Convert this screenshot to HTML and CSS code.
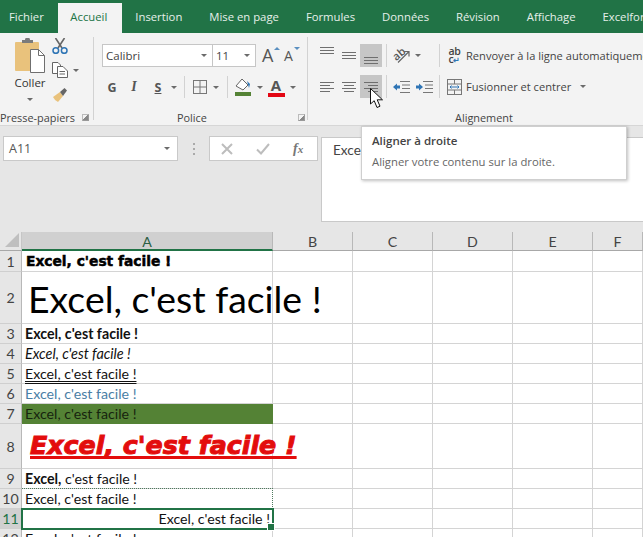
FILE: index.html
```html
<!DOCTYPE html>
<html lang="fr">
<head>
<meta charset="utf-8">
<title>Excel</title>
<link rel="stylesheet" href="styles.css">
</head>
<body>
<div class="app">
  <nav class="tabs">
    <span class="tab first">Fichier</span>
    <span class="tab active">Accueil</span>
    <span class="tab">Insertion</span>
    <span class="tab">Mise en page</span>
    <span class="tab">Formules</span>
    <span class="tab">Données</span>
    <span class="tab">Révision</span>
    <span class="tab">Affichage</span>
    <span class="tab">Excelformation</span>
  </nav>

  <section class="ribbon">
    <div class="group g-clip">
      <div class="clip-body">
        <div class="paste">
          <svg width="30" height="36" viewBox="0 0 30 36">
            <rect x="0" y="4" width="24" height="29" rx="1" fill="#e9c27c"/>
            <path d="M7 5 V2 H10 A2.500 2.500 0 0 1 15 2 H18 V5 Z" fill="#7b7b7b"/>
            <path d="M15.500 11.500 H23.500 L29.500 17.500 V34.500 H15.500 Z" fill="#fff" stroke="#6f6f6f"/>
            <path d="M23.500 11.500 V17.500 H29.500" fill="none" stroke="#6f6f6f"/>
          </svg>
          <span class="coller">Coller</span>
          <span class="arrow"></span>
        </div>
        <div class="clip-tools">
          <svg width="16" height="16" viewBox="0 0 16 16">
            <path d="M3.500 0 L10 10 M12.500 0 L6 10" stroke="#666" stroke-width="1.600" fill="none"/>
            <circle cx="3.800" cy="12.500" r="2.800" fill="none" stroke="#2f75b5" stroke-width="1.500"/>
            <circle cx="12.200" cy="12.500" r="2.800" fill="none" stroke="#2f75b5" stroke-width="1.500"/>
          </svg>
          <div class="copy-row">
            <svg width="16" height="16" viewBox="0 0 16 16" fill="#fff" stroke="#666">
              <path d="M.5 .5 H6 L8.500 3 V11.500 H.5 Z"/>
              <path d="M5.500 4.500 H11 L15.500 9 V15.500 H5.500 Z"/>
              <path d="M7.500 9.500 H13 M7.500 12 H13" fill="none"/>
            </svg>
            <span class="arrow"></span>
          </div>
          <svg width="17" height="17" viewBox="0 0 17 17">
            <path d="M1 11 L8 6 L11 10 L6 16 Q3 15 1 11 Z" fill="#e9c27c"/>
            <path d="M8 6 L12.500 2 L15 4.500 L11 10 Z" fill="#666"/>
          </svg>
        </div>
      </div>
      <div class="group-label l-clip"><span>Presse-papiers</span><i class="launcher"></i></div>
    </div>
    <div class="vsep"></div>

    <div class="group g-font">
      <div class="font-top">
        <div class="select s-font"><span>Calibri</span><span class="arrow"></span></div>
        <div class="select s-size"><span>11</span><span class="arrow"></span></div>
        <span class="grow big">A<i class="tri up"></i></span>
        <span class="grow small">A<i class="tri down"></i></span>
      </div>
      <div class="font-tools">
        <b class="fmt">G</b>
        <i class="fmt it">I</i>
        <u class="fmt st">S</u>
        <span class="arrow"></span>
        <span class="isep"></span>
        <svg width="14" height="14" viewBox="0 0 14 14" fill="none" stroke="#777"><rect x=".5" y=".5" width="13" height="13"/><path d="M7 0 V14 M0 7 H14"/></svg>
        <span class="arrow"></span>
        <span class="isep"></span>
        <svg width="17" height="20" viewBox="0 0 17 20">
          <path d="M1 9 L7 2 L13 8 L8 13 Z" fill="#fff" stroke="#666"/>
          <path d="M12 4 L15 7 L14 11 Z" fill="#2f75b5"/>
          <rect x="0" y="15" width="16" height="4" fill="#548235"/>
        </svg>
        <span class="arrow"></span>
        <span class="color-a">A</span>
        <span class="arrow"></span>
      </div>
      <div class="group-label l-font"><span>Police</span><i class="launcher"></i></div>
    </div>
    <div class="vsep"></div>

    <div class="group g-align">
      <div class="align-grid">
        <span class="lines top"><i></i><i></i><i></i></span>
        <span class="lines mid"><i></i><i></i><i></i></span>
        <span class="abtn"><span class="lines bot"><i></i><i></i><i></i></span></span>
        <span class="isep tall"></span>
        <div class="orient">
          <svg width="18" height="17" viewBox="0 0 18 17">
            <text x="0" y="11" class="orient-text" transform="rotate(-40 6 8)">ab</text>
            <path d="M5 15.500 L15.500 5 M11 4.500 H16 V9.500" stroke="#666" fill="none" stroke-width="1.200"/>
          </svg>
          <span class="arrow"></span>
        </div>
        <span class="isep tall"></span>
        <span class="wrap-ic">ab<br>c<em>↵</em></span>
        <span class="alabel">Renvoyer à la ligne automatiquement</span>

        <span class="lines l"><i></i><i class="s"></i><i></i><i class="s"></i></span>
        <span class="lines c"><i></i><i class="s"></i><i></i><i class="s"></i></span>
        <span class="abtn"><span class="lines r"><i></i><i class="s"></i><i></i><i class="s"></i></span></span>
        <span class="isep tall"></span>
        <svg width="17" height="14" viewBox="0 0 17 14">
          <path d="M7 1.500 H17 M9 5 H17 M9 8.500 H17 M7 12.500 H17" stroke="#777"/>
          <path d="M0 7 L4 3.500 V5.500 H7 V8.500 H4 V10.500 Z" fill="#2f75b5"/>
        </svg>
        <svg width="17" height="14" viewBox="0 0 17 14">
          <path d="M7 1.500 H17 M9 5 H17 M9 8.500 H17 M7 12.500 H17" stroke="#777"/>
          <path d="M7 7 L3 3.500 V5.500 H0 V8.500 H3 V10.500 Z" fill="#2f75b5"/>
        </svg>
        <span class="isep tall"></span>
        <svg width="15" height="16" viewBox="0 0 15 16" fill="none" stroke="#777">
          <rect x=".5" y=".5" width="14" height="15"/>
          <path d="M0 5 H15 M0 11 H15 M7.500 0 V5 M7.500 11 V16"/>
          <path d="M3 8 H12 M4.500 6.500 L3 8 L4.500 9.500 M10.500 6.500 L12 8 L10.500 9.500" stroke="#2f75b5"/>
        </svg>
        <span class="alabel">Fusionner et centrer<span class="arrow merge-arrow"></span></span>
      </div>
      <div class="group-label l-align"><span>Alignement</span></div>
    </div>
  </section>

  <section class="formula">
    <div class="namebox"><span>A11</span><span class="arrow"></span></div>
    <div class="grip"><i></i><i></i><i></i></div>
    <div class="fxbox">
      <svg width="12" height="12" viewBox="0 0 12 12"><path d="M1 1 L11 11 M11 1 L1 11" stroke="#bdbdbd" stroke-width="2"/></svg>
      <svg width="14" height="12" viewBox="0 0 14 12"><path d="M1 6.500 L5 10.500 L13 1" stroke="#bdbdbd" stroke-width="2" fill="none"/></svg>
      <span class="fx">f<small>x</small></span>
    </div>
    <div class="input">Excel, c'est facile !</div>
  </section>

  <section class="sheet">
    <div class="corner"><svg width="14" height="14" viewBox="0 0 14 14"><path d="M14 0 V14 H0 Z" fill="#bfbfbf"/></svg></div>
    <div class="ch on">A</div><div class="ch">B</div><div class="ch">C</div><div class="ch">D</div><div class="ch">E</div><div class="ch">F</div>

    <div class="rh">1</div><div class="cell black">Excel, c'est facile !</div><div class="cell"></div><div class="cell"></div><div class="cell"></div><div class="cell"></div><div class="cell"></div>
    <div class="rh">2</div><div class="cell huge">Excel, c'est facile !</div><div class="cell"></div><div class="cell"></div><div class="cell"></div><div class="cell"></div><div class="cell"></div>
    <div class="rh">3</div><div class="cell bold">Excel, c'est facile !</div><div class="cell"></div><div class="cell"></div><div class="cell"></div><div class="cell"></div><div class="cell"></div>
    <div class="rh">4</div><div class="cell ital">Excel, c'est facile !</div><div class="cell"></div><div class="cell"></div><div class="cell"></div><div class="cell"></div><div class="cell"></div>
    <div class="rh">5</div><div class="cell"><span class="dbl">Excel, c'est facile !</span></div><div class="cell"></div><div class="cell"></div><div class="cell"></div><div class="cell"></div><div class="cell"></div>
    <div class="rh">6</div><div class="cell blue">Excel, c'est facile !</div><div class="cell"></div><div class="cell"></div><div class="cell"></div><div class="cell"></div><div class="cell"></div>
    <div class="rh">7</div><div class="cell fill">Excel, c'est facile !</div><div class="cell"></div><div class="cell"></div><div class="cell"></div><div class="cell"></div><div class="cell"></div>
    <div class="rh">8</div><div class="cell fancy"><span>Excel, c'est facile !</span></div><div class="cell"></div><div class="cell"></div><div class="cell"></div><div class="cell"></div><div class="cell"></div>
    <div class="rh">9</div><div class="cell"><span><b>Excel,</b> c'est facile !</span></div><div class="cell"></div><div class="cell"></div><div class="cell"></div><div class="cell"></div><div class="cell"></div>
    <div class="rh">10</div><div class="cell ants">Excel, c'est facile !</div><div class="cell"></div><div class="cell"></div><div class="cell"></div><div class="cell"></div><div class="cell"></div>
    <div class="rh sel">11</div><div class="cell current">Excel, c'est facile !<i class="handle"></i></div><div class="cell"></div><div class="cell"></div><div class="cell"></div><div class="cell"></div><div class="cell"></div>
    <div class="rh">12</div><div class="cell">Excel, c'est facile !</div><div class="cell"></div><div class="cell"></div><div class="cell"></div><div class="cell"></div><div class="cell"></div>
  </section>

  <div class="tooltip">
    <strong>Aligner à droite</strong>
    <span>Aligner votre contenu sur la droite.</span>
  </div>
  <svg class="pointer" width="15" height="21" viewBox="0 0 15 21">
    <path d="M.5 .5 V16 L4.200 12.700 L7 19.500 L10 18.200 L7.200 11.800 H12.500 Z" fill="#fff" stroke="#111"/>
  </svg>
</div>
</body>
</html>
```
FILE: styles.css
```css
* { box-sizing: border-box; }
html, body { margin: 0; padding: 0; background: #e6e6e6; }
.app {
  position: relative;
  width: 643px;
  height: 537px;
  overflow: hidden;
  display: flex;
  flex-direction: column;
  font-family: "Open Sans", "Noto Sans", sans-serif;
  color: #444;
}

/* tabs */
.tabs {
  flex: none;
  height: 33px;
  padding-top: 3px;
  display: flex;
  background: #217346;
  color: #e6f0ea;
  font-size: 11.300px;
  white-space: nowrap;
  overflow: hidden;
}
.tab {
  padding: 0 13.500px;
  height: 30px;
  line-height: 28px;
  flex: none;
}
.tab.first { padding: 0 14px 0 9px; }
.tab.active {
  background: #f3f3f3;
  color: #217346;
  padding: 0 14.500px 0 12.500px;
}

/* ribbon */
.ribbon {
  flex: none;
  height: 93px;
  display: flex;
  background: #f3f3f3;
  border-bottom: 1px solid #d6d6d6;
  font-size: 11.100px;
  color: #444;
}
.group {
  position: relative;
  display: flex;
  flex-direction: column;
  flex: none;
}
.vsep {
  flex: none;
  width: 1px;
  margin: 4px 0 5px;
  background: #d2d2d2;
}
.g-clip { width: 93px; }
.g-font { width: 213px; padding-left: 8px; }
.g-align { flex: 1; min-width: 0; overflow: hidden; }
.group-label {
  margin-top: auto;
  height: 16px;
  line-height: 15px;
  display: flex;
  align-items: center;
  white-space: nowrap;
  font-size: 10.900px;
}
.l-clip { padding-right: 4px; }
.l-clip .launcher { margin-left: auto; }
.l-font { padding-left: 75px; padding-right: 2px; }
.l-font .launcher { margin-left: auto; }
.l-align { padding-left: 147px; }
.launcher {
  width: 7px;
  height: 7px;
  border: 1px solid #999;
  border-top-color: #bbb;
  border-left-color: #bbb;
  background: linear-gradient(135deg, transparent 50%, #888 50%);
}
.arrow {
  flex: none;
  display: inline-block;
  width: 0;
  height: 0;
  border-left: 3px solid transparent;
  border-right: 3px solid transparent;
  border-top: 3px solid #6b6b6b;
}

/* clipboard */
.clip-body {
  display: flex;
  padding: 5px 0 0 15px;
  gap: 7px;
}
.paste {
  width: 30px;
  display: flex;
  flex-direction: column;
  align-items: center;
}
.coller {
  margin-top: -1px;
  font-size: 11.500px;
  line-height: 20px;
  color: #333;
}
.paste .arrow { margin-top: 5px; }
.clip-tools {
  display: flex;
  flex-direction: column;
  gap: 8px;
}
.copy-row {
  display: flex;
  align-items: center;
  gap: 5px;
}

/* font */
.font-top {
  display: flex;
  align-items: flex-start;
  padding-top: 11px;
  height: 34px;
}
.select {
  height: 23px;
  background: #fff;
  border: 1px solid #c6c6c6;
  display: flex;
  align-items: center;
  justify-content: space-between;
  padding: 0 5px 0 3px;
  font-size: 11.500px;
}
.s-font { width: 110px; border-right-width: 0; }
.s-size { width: 44px; }
.grow { position: relative; color: #555; line-height: 23px; }
.big { margin-left: 6px; font-size: 18px; width: 22px; }
.small { font-size: 14px; width: 16px; }
.tri {
  position: absolute;
  top: 3px;
  right: 4px;
  width: 0;
  height: 0;
  border-left: 3px solid transparent;
  border-right: 3px solid transparent;
}
.tri.up { border-bottom: 3px solid #5a8fc0; }
.tri.down { border-top: 3px solid #5a8fc0; right: 0; }
.font-tools {
  margin-top: 9px;
  height: 22px;
  display: grid;
  grid-template-columns: 20px 24px 24px 7px 14px 17px 16px 6px 26px 7px 26px 8px;
  align-items: center;
  justify-items: center;
}
.fmt { font-size: 12.500px; color: #555; text-decoration: none; font-weight: 700; }
.it { font-family: "Liberation Serif", serif; font-size: 14px; font-style: italic; }
.st { text-decoration: underline; }
.isep {
  width: 1px;
  height: 22px;
  background: #d2d2d2;
}
.color-a {
  width: 17px;
  text-align: center;
  font-size: 15px;
  font-weight: 700;
  line-height: 15px;
  color: #555;
  border-bottom: 4px solid #e30613;
}

/* alignment */
.align-grid {
  margin-top: 11px;
  margin-left: 8px;
  display: grid;
  grid-template-columns: 22px 22px 22px 8px 23px 22px 8px 23px auto;
  grid-template-rows: 23px 23px;
  row-gap: 8px;
  align-items: center;
  justify-items: center;
  width: 360px;
}
.lines {
  display: flex;
  flex-direction: column;
  width: 14px;
  gap: 2px;
}
.lines i { display: block; height: 1px; background: #6f6f6f; }
.lines.top { align-self: start; padding-top: 3px; }
.lines.l i.s { width: 10px; }
.lines.c i.s { width: 10px; align-self: center; }
.lines.r i.s { width: 10px; align-self: flex-end; }
.abtn {
  width: 22px;
  height: 23px;
  background: #c6c6c6;
  display: flex;
  align-items: center;
  justify-content: center;
}
.abtn .bot { align-self: flex-end; padding-bottom: 3px; }
.isep.tall { height: 23px; }
.orient {
  grid-column: span 2;
  justify-self: start;
  display: flex;
  align-items: center;
  gap: 4px;
  padding-left: 3px;
}
.orient-text { font-size: 11px; font-weight: 600; fill: #555; }
.wrap-ic {
  font-size: 10.500px;
  line-height: 8px;
  color: #444;
  letter-spacing: -.2px;
  font-weight: 600;
}
.wrap-ic em { color: #2f75b5; font-style: normal; font-size: 8px; }
.alabel {
  justify-self: start;
  white-space: nowrap;
  display: flex;
  align-items: center;
}
.merge-arrow { margin-left: 9px; }

/* formula bar */
.formula {
  flex: none;
  height: 106px;
  padding: 10px 0 0 3px;
  display: flex;
  align-items: flex-start;
  background: #e6e6e6;
}
.namebox {
  width: 175px;
  height: 25px;
  flex: none;
  background: #fff;
  border: 1px solid #c9c9c9;
  display: flex;
  align-items: center;
  justify-content: space-between;
  padding: 0 7px 0 5px;
  font-size: 12.500px;
  color: #555;
}
.grip {
  flex: none;
  width: 31px;
  height: 25px;
  display: flex;
  flex-direction: column;
  align-items: center;
  justify-content: center;
  gap: 3px;
}
.grip i { width: 2px; height: 2px; background: #aaa; }
.fxbox {
  flex: none;
  width: 109px;
  height: 25px;
  background: #fff;
  border: 1px solid #c9c9c9;
  display: flex;
  align-items: center;
  padding-left: 11px;
  gap: 23px;
}
.fx {
  font-family: "Liberation Serif", serif;
  font-style: italic;
  font-weight: 700;
  font-size: 14px;
  color: #777;
}
.fx small { font-size: 11px; }
.input {
  flex: 1;
  height: 85px;
  margin: 1px 0 0 3px;
  padding: 4px 0 0 11px;
  background: #fff;
  border: 1px solid #c9c9c9;
  border-right: 0;
  font-family: "Lato", sans-serif;
  font-size: 13.600px;
  color: #444;
  white-space: nowrap;
  overflow: hidden;
}

/* sheet */
.sheet {
  flex: 1;
  min-height: 0;
  display: grid;
  grid-template-columns: 22px 251px repeat(4, 80px) 50px;
  grid-template-rows: 19px 21px 52px 20px 20px 20px 20px 20px 45px 20px 20px 20px 20px;
  background: #fff;
  font-family: "Lato", sans-serif;
  font-size: 14.200px;
  color: #111;
  overflow: hidden;
}
.corner {
  background: #e6e6e6;
  border-right: 1px solid #c6c6c6;
  border-bottom: 1px solid #a8a8a8;
  display: flex;
  align-items: flex-end;
  justify-content: flex-end;
  padding: 0 2px 3px 0;
}
.ch {
  background: #e6e6e6;
  border-right: 1px solid #b8b8b8;
  border-bottom: 1px solid #a8a8a8;
  text-align: center;
  line-height: 20px;
  color: #444;
}
.ch.on {
  background: #d0d0d0;
  border-bottom: 2px solid #217346;
  color: #2b5e43;
}
.rh {
  background: #e6e6e6;
  border-right: 1px solid #b8b8b8;
  border-bottom: 1px solid #cfcfcf;
  display: flex;
  align-items: center;
  justify-content: center;
  color: #444;
}
.rh.sel { background: #d0d0d0; color: #217346; }
.cell {
  position: relative;
  border-right: 1px solid #d4d4d4;
  border-bottom: 1px solid #d4d4d4;
  padding: 0 0 0 3px;
  line-height: 20px;
  white-space: nowrap;
  min-width: 0;
}
.black {
  font-family: "DejaVu Sans", sans-serif;
  font-weight: 700;
  font-size: 13.800px;
  -webkit-text-stroke: .5px #000;
  color: #000;
  padding-left: 4px;
}
.huge {
  font-size: 37.400px;
  line-height: 53px;
  padding-left: 6px;
  color: #000;
}
.bold { font-weight: 700; }
.ital { font-style: italic; font-size: 14.400px; }
.dbl {
  text-decoration: underline double;
  text-decoration-skip-ink: none;
  text-decoration-thickness: 1px;
  text-underline-offset: 2px;
}
.blue { color: #4a7ea5; }
.fill { background: #548235; border-color: #548235; color: #16240e; }
.fancy {
  font-family: "DejaVu Sans", sans-serif;
  font-weight: 700;
  font-style: italic;
  font-size: 25.300px;
  color: #e30d0d;
  -webkit-text-stroke: 1px #e30d0d;
  padding-left: 8px;
  line-height: 44px;
}
.fancy span {
  text-decoration: underline;
  text-decoration-thickness: 3px;
  text-underline-offset: 2px;
  text-decoration-skip-ink: none;
}
.ants {
  border-top: 1px dotted #4f7a5f;
  border-right: 1px dotted #4f7a5f;
  border-bottom: 0;
  margin-top: -1px;
}
.current {
  text-align: right;
  padding: 0 2px 0 0;
  outline: 2px solid #217346;
  outline-offset: -1px;
  z-index: 1;
}
.handle {
  position: absolute;
  right: -3px;
  bottom: -3px;
  width: 6px;
  height: 6px;
  background: #217346;
  border: 1px solid #fff;
  box-sizing: content-box;
}

/* overlays */
.tooltip {
  position: absolute;
  left: 361px;
  top: 126px;
  width: 266px;
  height: 54px;
  padding: 6px 10px;
  background: #fff;
  border: 1px solid #cfcfcf;
  box-shadow: 1px 1px 3px rgba(0, 0, 0, .25);
  display: flex;
  flex-direction: column;
  gap: 5px;
  font-size: 11.300px;
  line-height: 16px;
  color: #666;
}
.tooltip strong { color: #444; font-weight: 600; font-size: 11.500px; }
.pointer {
  position: absolute;
  left: 370px;
  top: 88px;
}
```
